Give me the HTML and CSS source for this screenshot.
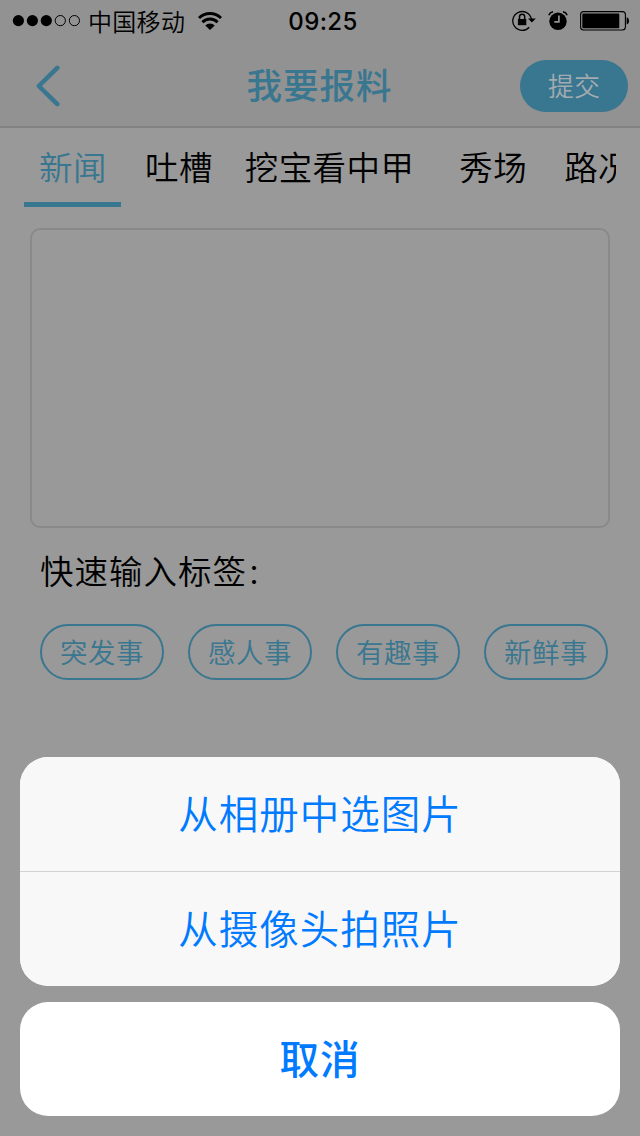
FILE: index.html
```html
<!DOCTYPE html>
<html lang="zh-CN">
<head>
<meta charset="utf-8">
<title>我要报料</title>
<link rel="stylesheet" href="styles.css">
</head>
<body>
<div class="screen">
  <header class="header">
    <div class="status">
      <div class="carrier">
        <svg class="signal" width="69" height="14" viewBox="0 0 69 14"><g><circle cx="6.4" cy="6.6" r="5.6"/><circle cx="20.4" cy="6.6" r="5.6"/><circle cx="34.3" cy="6.6" r="5.6"/></g><g fill="none" stroke="#000" stroke-width="1"><circle cx="48.3" cy="6.6" r="5.1"/><circle cx="62.4" cy="6.6" r="5.1"/></g></svg>
        <span class="carrier-name">中国移动</span>
        <svg class="wifi" width="26" height="20" viewBox="0 0 26 20"><path d="M8.3 14.4a6.6 6.6 0 0 1 9.4 0L13 19z"/><g fill="none" stroke="#000" stroke-width="2.9"><path d="M5.4 11.2a10.8 10.8 0 0 1 15.2 0"/><path d="M2 7a15.8 15.8 0 0 1 22 0"/></g></svg>
      </div>
      <div class="clock">09:25</div>
      <div class="indicators">
        <svg width="24" height="22" viewBox="0 0 24 22"><path d="M19.4 9.2A9.4 9.4 0 1 0 17.2 17.2" fill="none" stroke="#000" stroke-width="1.3"/><path d="M16 8.4h7.8L19.9 12.6z"/><path d="M5.9 9h8.4v6.2H5.9z"/><path d="M7.5 9.4V6.8a2.6 2.6 0 0 1 5.2 0v2.6" fill="none" stroke="#000" stroke-width="1.5"/></svg>
        <svg width="20" height="20" viewBox="0 0 20 20"><circle cx="10" cy="10.3" r="8.7"/><path d="M.8 4.2C1.6 2.3 3 1.1 5 .7M19.2 4.2C18.4 2.3 17 1.1 15 .7" fill="none" stroke="#000" stroke-width="1.5"/><path d="M10.9 4.6v6.3H6.3" fill="none" stroke="#929292" stroke-width="1.7"/></svg>
        <svg width="50" height="20" viewBox="0 0 50 20"><rect x=".6" y=".6" width="44.8" height="18.4" rx="3" fill="none" stroke="#000" stroke-width="1.1"/><rect x="2.3" y="2.4" width="37" height="14.8" rx="1"/><path d="M46.6 6.2q2.4.5 2.4 3.6t-2.4 3.6z"/></svg>
      </div>
    </div>
    <div class="navbar">
      <svg class="back" width="26" height="42" viewBox="0 0 26 42"><path d="M22.3 2.8L3.8 21l18.5 18.2" /></svg>
      <h1 class="title">我要报料</h1>
      <button class="submit">提交</button>
    </div>
  </header>
  <nav class="tabs">
    <span class="tab active">新闻</span><span class="tab">吐槽</span><span class="tab wide">挖宝看中甲</span><span class="tab">秀场</span><span class="tab">路况</span>
  </nav>
  <main class="content">
    <div class="editor"></div>
    <p class="label">快速输入标签<span class="colon">：</span></p>
    <div class="tags">
      <span class="tag">突发事</span><span class="tag">感人事</span><span class="tag">有趣事</span><span class="tag">新鲜事</span>
    </div>
  </main>
  <div class="sheet">
    <div class="options">
      <button class="option">从相册中选图片</button>
      <button class="option">从摄像头拍照片</button>
    </div>
    <button class="cancel">取消</button>
  </div>
</div>
</body>
</html>
```
FILE: styles.css
```css
* { box-sizing: border-box; }
body { margin: 0; background: #999; font-family: "Noto Sans CJK SC", sans-serif; color: #000; }
button { border: 0; margin: 0; padding: 0; font-family: inherit; }
svg { display: block; flex: none; }
.screen { width: 640px; height: 1136px; display: flex; flex-direction: column; background: #999; overflow: hidden; }
.header { height: 128px; flex: none; background: #929292; border-bottom: 2px solid #828282; }
.status { height: 40px; padding: 1px 10px 0 12px; display: grid; grid-template-columns: 1fr 76px 1fr; grid-template-rows: 39px; align-items: center; }
.carrier { display: flex; align-items: center; }
.carrier-name { margin-left: 7px; font-size: 24px; line-height: 37px; letter-spacing: .3px; font-weight: 350; white-space: nowrap; }
.wifi { margin-left: 12px; }
.clock { padding: 2px 0 0 4px; font: 500 24px/38px Inter, sans-serif; letter-spacing: .4px; text-align: center; white-space: nowrap; }
.indicators { display: flex; justify-content: flex-end; align-items: center; gap: 12px; }
.navbar { height: 86px; padding: 0 12px 0 35px; display: grid; grid-template-columns: 108px 1fr 108px; align-items: center; }
.back { fill: none; stroke: #39768f; stroke-width: 4.5; stroke-linecap: round; stroke-linejoin: round; margin-top: 6px; }
.title { margin: 0; padding: 1px 24px 0 0; text-align: center; font-size: 35.5px; line-height: 50px; letter-spacing: 1px; font-weight: 500; color: #39768f; }
.submit { height: 52px; margin-top: 6px; padding-bottom: 3px; border-radius: 26px; background: #39768f; color: #a3abb0; font-size: 26px; line-height: 49px; font-weight: 350; }
.tabs { height: 80px; flex: none; margin: 0 24px; display: flex; overflow: hidden; }
.tab { flex: none; height: 79px; padding: 0 15px; margin-right: 9px; font-size: 33.5px; letter-spacing: .4px; line-height: 76px; font-weight: 350; white-space: nowrap; }
.active { color: #39768f; width: 97px; border-bottom: 5px solid #39768f; }
.wide { padding-left: 8px; padding-right: 21px; }
.tab:last-child { margin-left: -2px; }
.content { padding: 20px 30px 0; }
.editor { height: 300px; border: 2px solid #898989; border-radius: 10px; }
.label { margin: 16px 0 0 10px; font-size: 33.5px; line-height: 52px; letter-spacing: 1px; font-weight: 350; }
.colon { font-size: 28px; line-height: 20px; }
.tags { margin: 28px 0 0 10px; display: flex; gap: 24px; }
.tag { width: 124px; height: 56px; flex: none; border: 2px solid #39768f; border-radius: 28px; color: #39768f; font-size: 27.5px; letter-spacing: .5px; line-height: 51px; text-align: center; font-weight: 350; }
.sheet { margin: auto 20px 20px; display: flex; flex-direction: column; gap: 16px; }
.options { border-radius: 28px; overflow: hidden; background: #f8f8f8; }
.option { display: block; width: 100%; height: 114px; padding-bottom: 4px; color: #007aff; background: #f8f8f8; font-size: 39.5px; letter-spacing: 1px; line-height: 110px; font-weight: 350; }
.option + .option { height: 115px; border-top: 1px solid #d2d2d4; }
.cancel { height: 114px; padding-bottom: 4px; border-radius: 28px; background: #fff; color: #007aff; font-size: 39.5px; letter-spacing: 1px; line-height: 110px; font-weight: 500; }
```
